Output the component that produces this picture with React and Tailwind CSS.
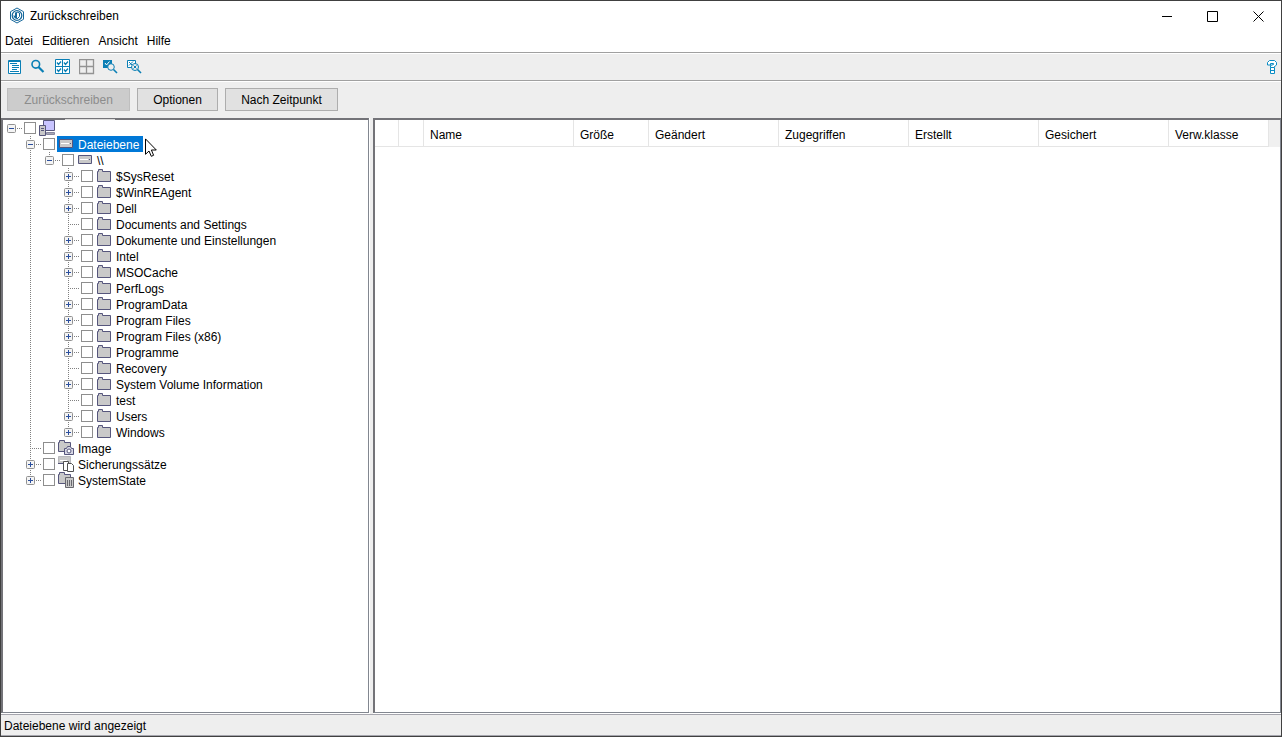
import { useState } from 'react';

const folders = [
  ['$SysReset', true],
  ['$WinREAgent', true],
  ['Dell', true],
  ['Documents and Settings', false],
  ['Dokumente und Einstellungen', true],
  ['Intel', true],
  ['MSOCache', true],
  ['PerfLogs', false],
  ['ProgramData', true],
  ['Program Files', true],
  ['Program Files (x86)', true],
  ['Programme', true],
  ['Recovery', false],
  ['System Volume Information', true],
  ['test', false],
  ['Users', true],
  ['Windows', true],
];

// guides: one entry per indent level, true = the dotted line runs through
const rows = [
  { id: 'host', label: '', icon: 'computer', guides: [], state: 'open', last: true },
  { id: 'files', label: 'Dateiebene', icon: 'drive', guides: [false], state: 'open' },
  { id: 'share', label: '\\\\', icon: 'drive', guides: [false, true], state: 'open', last: true },
  ...folders.map(([label, hasChildren], i) => ({
    id: label,
    label,
    icon: 'folder',
    guides: [false, true, false],
    state: hasChildren ? 'closed' : 'leaf',
    last: i === folders.length - 1,
  })),
  { id: 'image', label: 'Image', icon: 'image', guides: [false], state: 'leaf' },
  { id: 'sets', label: 'Sicherungssätze', icon: 'sets', guides: [false], state: 'closed' },
  { id: 'state', label: 'SystemState', icon: 'state', guides: [false], state: 'closed', last: true },
];

const columns = [
  { label: '', width: 'w-6' },
  { label: '', width: 'w-[25px]' },
  { label: 'Name', width: 'w-[150px]' },
  { label: 'Größe', width: 'w-[75px]' },
  { label: 'Geändert', width: 'w-[130px]' },
  { label: 'Zugegriffen', width: 'w-[130px]' },
  { label: 'Erstellt', width: 'w-[130px]' },
  { label: 'Gesichert', width: 'w-[130px]' },
  { label: 'Verw.klasse', width: 'w-[100px]' },
];

function NodeIcon({ name }) {
  return (
    <svg width="18" height="16" viewBox="0 0 18 16" className="shrink-0" fill="#c9c9c9" stroke="#56567c">
      {name === 'computer' && (
        <>
          <path d="M5.5.5H16.5V10.5H5.5Z" fill="#c8c4ff" />
          <path d="M8.5 12.5H16.5V14.5H8.5Z" fill="#a8a8b4" stroke="#8888a0" />
          <path d="M1.5 5.5H7.5V15.5H1.5Z" />
          <path d="M3 8.5H6M3 10.5H6" />
        </>
      )}
      {name === 'drive' && (
        <>
          <path d="M2.5 3.5H15.5V11.5H2.5Z" />
          <path d="M4 7.5H12" stroke="#fff" />
          <path d="M13 7.5H14" />
        </>
      )}
      {name === 'folder' && <path d="M2.5 13.5V3.5H3.5V1.5H7.5V3.5H15.5V13.5Z" />}
      {name === 'image' && (
        <>
          <path d="M1.5 11.5V2.5H2.5V.5H7.5V2.5H13.5V11.5Z" />
          <path d="M7.5 8.5H9.5L10.5 6.5H13.5L14.5 8.5H16.5V14.5H7.5Z" fill="#d8d8e4" />
          <circle cx="12" cy="11" r="2" fill="#fff" />
        </>
      )}
      {name === 'sets' && (
        <>
          <path d="M1.5.5H13.5V7.5H1.5Z" stroke="#b8b8bc" />
          <path d="M1 7.5H10" />
          <path d="M3 4.5H10" stroke="#fff" />
          <path d="M6.5 5.5H11.5V14.5H6.5Z" fill="#fff" stroke="#505050" />
          <path d="M10.5 7.5H14.5L16.5 9.5V15.5H10.5Z" fill="#fff" stroke="#505050" />
        </>
      )}
      {name === 'state' && (
        <>
          <path d="M1.5 11.5V2.5H2.5V.5H7.5V2.5H13.5V11.5Z" />
          <path d="M8.5 5.5H16.5V15.5H8.5Z" stroke="#68686e" />
          <path d="M10.5 8V14M12.5 8V14M14.5 8V14" stroke="#68686e" />
        </>
      )}
    </svg>
  );
}

function Guide() {
  return (
    <svg width="19" height="16" className="shrink-0" stroke="#808080" strokeDasharray="1 1" shapeRendering="crispEdges">
      <path d="M8.5 0V16" />
    </svg>
  );
}

function Expander({ state, last, root }) {
  return (
    <svg width="19" height="16" className="shrink-0" fill="none">
      <g stroke="#808080" strokeDasharray="1 1">
        {!root && <path d={last ? 'M8.5 0V9' : 'M8.5 0V16'} />}
        <path d="M8 8.5H19" />
      </g>
      {state !== 'leaf' && (
        <>
          <rect x="4.5" y="4.5" width="8" height="8" rx="1" fill="#f4f4f4" stroke="#919191" />
          <path d={state === 'closed' ? 'M6 8.5H11M8.5 6V11' : 'M6 8.5H11'} stroke="#2b4f9e" />
        </>
      )}
    </svg>
  );
}

function TreeRow({ row, selected, onSelect }) {
  return (
    <li className="flex h-4 items-center">
      {row.guides.map((line, i) =>
        line ? <Guide key={i} /> : <span key={i} className="w-[19px] shrink-0" />
      )}
      <Expander state={row.state} last={row.last} root={row.id === 'host'} />
      <input
        type="checkbox"
        aria-label={row.label || 'Knoten'}
        className="ml-0.5 h-3 w-3 shrink-0 appearance-none border border-[#8e8e8e] bg-white checked:bg-[#0078d7]"
      />
      <button
        type="button"
        onClick={() => onSelect(row.id)}
        className={`relative ml-0.5 flex h-4 items-center gap-[3px] pr-1 whitespace-nowrap ${selected ? 'bg-[#0078d7] text-white' : ''}`}
      >
        <NodeIcon name={row.icon} />
        <span className="pt-0.5">{row.label}</span>
        {selected && (
          <svg width="13" height="20" viewBox="0 0 13 20" className="absolute top-0.5 left-full ml-0.5" fill="#fff" stroke="#000">
            <path d="M.5.9V16.3L4 13L6.3 18.3L8.6 17.3L6.4 12H11.3Z" />
          </svg>
        )}
      </button>
    </li>
  );
}

const toolbar = [
  {
    label: 'Details',
    icon: (
      <>
        <path d="M1.5 1.5H13.5V14.5H1.5Z" fill="#fff" />
        <path d="M2 2.5H13M3 4.5H10M5 6.5H12M5 8.5H12M5 10.5H10M3 12.5H12" />
      </>
    ),
  },
  {
    label: 'Suchen',
    icon: (
      <>
        <circle cx="4.8" cy="5.3" r="3.8" strokeWidth="1.6" />
        <path d="M7.5 8L12.5 13" strokeWidth="2.2" />
      </>
    ),
  },
  {
    label: 'Alle auswählen',
    icon: (
      <>
        <path d="M.5.5H14.5V14.5H.5ZM7.5 1V14M1 7.5H14" fill="#fff" />
        <path d="M2 3.5L3.5 5.5L6 2.5M9 3.5L10.5 5.5L13 2.5M2 10.5L3.5 12.5L6 9.5M9 10.5L10.5 12.5L13 9.5" strokeWidth="1.3" />
      </>
    ),
  },
  {
    label: 'Auswahl aufheben',
    icon: <path d="M.5.5H14.5V14.5H.5ZM7.5 1V14M1 7.5H14" stroke="#939393" strokeWidth="1.3" />,
  },
  {
    label: 'Suchen und auswählen',
    icon: (
      <>
        <path d="M0 1H9V9H0Z" fill="#0a7fb5" stroke="none" />
        <path d="M2 4L3.5 6L6.5 2.5" stroke="#fff" />
        <circle cx="8" cy="8" r="3.3" fill="#eee" />
        <path d="M10.5 10.5L14 14" strokeWidth="1.6" />
      </>
    ),
  },
  {
    label: 'Suchen und abwählen',
    icon: (
      <>
        <path d="M.5 8.5V1.5H8.5V8.5Z" fill="#fff" />
        <path d="M2 3L5 6M6 2.5L2 6.5" />
        <circle cx="8" cy="8" r="3.5" fill="#eee" />
        <path d="M6.5 6.5L9.5 9.5M9.5 6.5L6.5 9.5" />
        <path d="M10.5 10.5L14 14" strokeWidth="1.6" />
      </>
    ),
  },
];

function App() {
  const [selectedId, setSelectedId] = useState('files');

  return (
    <div className="flex h-screen w-full flex-col border border-[#404040] bg-[#eeeeee] font-['Liberation_Sans',Arial,sans-serif] text-xs text-black select-none">
      {/* Title bar */}
      <header className="flex h-[30px] shrink-0 items-center bg-white pl-2">
        <svg width="16" height="18" viewBox="0 0 16 18" fill="none" stroke="#17689b">
          <path d="M8 1L14.5 4.7V12.3L8 16L1.5 12.3V4.7Z" />
          <circle cx="8" cy="8.5" r="4.8" strokeWidth="1.3" />
          <path d="M8 5V12C5.5 11.5 4.5 10 4.5 8L6 9V5.5Z" fill="#17689b" stroke="none" />
          <path d="M8 5L10.5 6V9.5L8 12" />
        </svg>
        <h1 className="ml-[5px] flex-1 font-['Roboto','Noto_Sans',sans-serif] text-xs">Zurückschreiben</h1>
        <button type="button" aria-label="Minimieren" className="flex h-full w-[46px] items-center justify-center">
          <svg width="11" height="11" stroke="#000"><path d="M0 5.5H10" /></svg>
        </button>
        <button type="button" aria-label="Maximieren" className="flex h-full w-[45px] items-center justify-center">
          <svg width="11" height="11" fill="none" stroke="#000"><path d="M.5.5H10.5V10.5H.5Z" /></svg>
        </button>
        <button type="button" aria-label="Schließen" className="flex h-full w-[46px] items-center justify-center">
          <svg width="11" height="11" stroke="#000"><path d="M.5.5L10.5 10.5M10.5.5L.5 10.5" /></svg>
        </button>
      </header>

      {/* Menu */}
      <nav className="flex h-[21px] shrink-0 items-center gap-[9px] bg-white pb-0.5 pl-1">
        {['Datei', 'Editieren', 'Ansicht', 'Hilfe'].map((item) => (
          <button key={item} type="button">{item}</button>
        ))}
      </nav>

      {/* Toolbar */}
      <div className="flex h-7 shrink-0 items-center gap-2 border-t border-[#a0a0a0] pt-px pr-0.5 pl-1.5 shadow-[inset_0_1px_#fff]">
        {toolbar.map(({ label, icon }) => (
          <button key={label} type="button" aria-label={label}>
            <svg width="16" height="16" viewBox="0 0 16 16" fill="none" stroke="#0a7fb5">{icon}</svg>
          </button>
        ))}
        <button type="button" aria-label="Hilfe" className="ml-auto">
          <svg width="14" height="16" viewBox="0 0 14 16" fill="#fff" stroke="#0a8cc4">
            <path d="M2.5 6V3.5L4.5 1.5H9.5L11.5 3.5V6L8.5 8.5H5.5V6.5L8.5 5.5V4.5H5.5V6Z" />
            <path d="M5.5 8.5H9.5V14.5H5.5ZM5 11.5H10" />
          </svg>
        </button>
      </div>

      {/* Actions */}
      <div className="flex h-[38px] shrink-0 items-center gap-[7px] border-t border-[#a0a0a0] pl-1.5 shadow-[inset_0_1px_#fff]">
        <button type="button" disabled className="h-[23px] w-[123px] border border-[#bfbfbf] bg-[#cccccc] text-[#8c8c8c]">
          Zurückschreiben
        </button>
        <button type="button" className="h-[23px] w-[81px] border border-[#adadad] bg-[#e1e1e1]">
          Optionen
        </button>
        <button type="button" className="h-[23px] w-[113px] border border-[#adadad] bg-[#e1e1e1]">
          Nach Zeitpunkt
        </button>
      </div>

      {/* Tree and file list */}
      <main className="flex min-h-0 flex-1 gap-[3px]">
        <section className="relative w-[369px] shrink-0 border-r border-b border-white">
          <div className="h-full overflow-auto border-t-2 border-r border-b border-l-2 border-t-[#737378] border-r-[#828790] border-b-[#828790] border-l-[#737378] bg-white">
            <ul>
              {rows.map((row) => (
                <TreeRow key={row.id} row={row} selected={row.id === selectedId} onSelect={setSelectedId} />
              ))}
            </ul>
          </div>
          <span className="absolute top-px left-16 h-px w-[50px] bg-[#dcdcdc]" />
        </section>

        <section className="min-w-0 flex-1 border-b border-white">
          <div className="h-full overflow-hidden border-t-2 border-r border-b border-l-2 border-t-[#737378] border-r-[#828790] border-b-[#828790] border-l-[#737378] bg-white">
            <table className="w-full table-fixed border-separate border-spacing-0">
              <thead>
                <tr className="h-[27px]">
                  {columns.map(({ label, width }, i) => (
                    <th key={i} scope="col" className={`${width} border-r border-b border-[#e5e5e5] p-0 pt-1 pl-1.5 text-left font-normal`}>
                      {label}
                    </th>
                  ))}
                  <th className="bg-[#f0f0f0] p-0" />
                </tr>
              </thead>
              <tbody />
            </table>
          </div>
        </section>
      </main>

      {/* Status */}
      <footer className="flex h-[22px] shrink-0 items-center border-y border-[#a5a5ad] pt-0.5 pl-[3px]">
        Dateiebene wird angezeigt
      </footer>
    </div>
  );
}

export default App;
